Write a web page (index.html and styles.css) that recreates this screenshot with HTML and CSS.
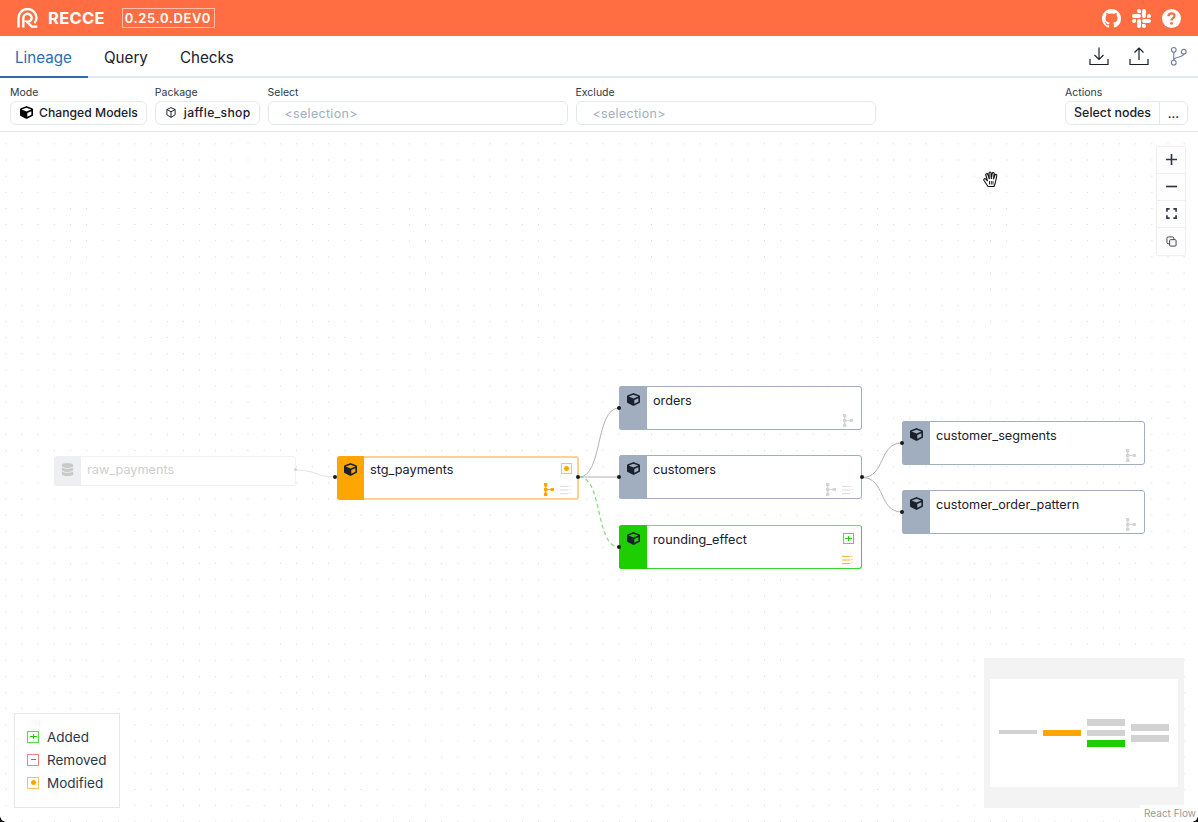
FILE: index.html
```html
<!DOCTYPE html>
<html>
  <head>
    <meta charset="utf-8">
    <title>Recce</title>
    <link rel="stylesheet" href="styles.css">
  </head>
  <body>
    <svg class="defs" width="0" height="0">
      <symbol id="cube" viewBox="0 0 512 512"><path d="M239.1 6.3l-208 78c-18.7 7-31.1 25-31.1 45v225.1c0 18.2 10.3 34.8 26.5 42.9l208 104c13.5 6.8 29.4 6.8 42.9 0l208-104c16.3-8.1 26.5-24.8 26.5-42.9V129.3c0-20-12.4-37.9-31.1-44.9l-208-78C262 2.2 250 2.2 239.1 6.3zM256 68.4l192 72v1.1l-192 78-192-78v-1.1l192-72zm32 356V275.5l160-65v133.9l-160 80z"/></symbol>
      <symbol id="lineage" viewBox="0 0 10 13"><rect x="0" y="0" width="3.400" height="3.400"/><rect x="0" y="4.800" width="3.400" height="3.400"/><rect x="0" y="9.600" width="3.400" height="3.400"/><rect x="6.600" y="5" width="3.400" height="3"/><path d="M1.700 2v9M1.700 6.500h6" fill="none" stroke="currentColor" stroke-width="1.200"/></symbol>
      <symbol id="rows" viewBox="0 0 12 10"><path d="M0 1h9M0 5h9M0 9h9" fill="none" stroke="currentColor"/><path d="M11 .5v1.500M11 4v1.500M11 7.500v1.500" fill="none" stroke="currentColor" stroke-dasharray="1 1"/></symbol>
    </svg>

    <header class="topbar">
      <svg class="logo" viewBox="0 0 21 20" fill="none" stroke="#fff" stroke-width="2.400">
        <path d="M1.500 19.500V10a9 9 0 0 1 18 0c0 2.200-.8 3.800-2.200 5"/>
        <path d="M6.300 19.500V10a4.200 4.200 0 0 1 8.400 0 3.800 3.800 0 0 1-3.800 3.600H9.800l5 5h5.500"/>
      </svg>
      <span class="brand">RECCE</span>
      <span class="version">0.25.0.DEV0</span>
      <span class="top-icons">
        <svg class="top-icon" viewBox="0 0 16 16"><path d="M8 0C3.58 0 0 3.58 0 8c0 3.54 2.29 6.53 5.47 7.59.4.07.55-.17.55-.38 0-.19-.01-.82-.01-1.49-2.01.37-2.53-.49-2.69-.94-.09-.23-.48-.94-.82-1.13-.28-.15-.68-.52-.01-.53.63-.01 1.08.58 1.23.82.72 1.21 1.87.87 2.33.66.07-.52.28-.87.51-1.07-1.78-.2-3.64-.89-3.64-3.95 0-.87.31-1.59.82-2.15-.08-.2-.36-1.02.08-2.12 0 0 .67-.21 2.2.82.64-.18 1.32-.27 2-.27.68 0 1.36.09 2 .27 1.53-1.04 2.2-.82 2.2-.82.44 1.1.16 1.92.08 2.12.51.56.82 1.27.82 2.15 0 3.07-1.87 3.75-3.65 3.95.29.25.54.73.54 1.48 0 1.07-.01 1.93-.01 2.2 0 .21.15.46.55.38A8.013 8.013 0 0016 8c0-4.42-3.58-8-8-8z"/></svg>
        <svg class="top-icon" viewBox="0 0 24 24"><path d="M5.042 15.165a2.528 2.528 0 0 1-2.52 2.523A2.528 2.528 0 0 1 0 15.165a2.527 2.527 0 0 1 2.522-2.52h2.52v2.52zM6.313 15.165a2.527 2.527 0 0 1 2.521-2.52 2.527 2.527 0 0 1 2.521 2.52v6.313A2.528 2.528 0 0 1 8.834 24a2.528 2.528 0 0 1-2.521-2.522v-6.313zM8.834 5.042a2.528 2.528 0 0 1-2.521-2.52A2.528 2.528 0 0 1 8.834 0a2.528 2.528 0 0 1 2.521 2.522v2.52H8.834zM8.834 6.313a2.528 2.528 0 0 1 2.521 2.521 2.528 2.528 0 0 1-2.521 2.521H2.522A2.528 2.528 0 0 1 0 8.834a2.528 2.528 0 0 1 2.522-2.521h6.312zM18.956 8.834a2.528 2.528 0 0 1 2.522-2.521A2.528 2.528 0 0 1 24 8.834a2.528 2.528 0 0 1-2.522 2.521h-2.522V8.834zM17.688 8.834a2.528 2.528 0 0 1-2.523 2.521 2.527 2.527 0 0 1-2.52-2.521V2.522A2.527 2.527 0 0 1 15.165 0a2.528 2.528 0 0 1 2.523 2.522v6.312zM15.165 18.956a2.528 2.528 0 0 1 2.523 2.522A2.528 2.528 0 0 1 15.165 24a2.527 2.527 0 0 1-2.52-2.522v-2.522h2.52zM15.165 17.688a2.527 2.527 0 0 1-2.52-2.523 2.526 2.526 0 0 1 2.52-2.52h6.313A2.527 2.527 0 0 1 24 15.165a2.528 2.528 0 0 1-2.522 2.523h-6.313z"/></svg>
        <svg class="top-icon" viewBox="0 0 20 20"><circle cx="10" cy="10" r="10"/><path d="M6.800 7.600c0-2 1.500-3.100 3.300-3.100s3.100 1.100 3.100 2.700c0 2.500-3.200 2.400-3.200 4.900" fill="none" stroke="#ff6e42" stroke-width="2.400"/><circle cx="10" cy="15.200" r="1.500" fill="#ff6e42"/></svg>
      </span>
    </header>

    <nav class="tabs">
      <a class="tab tab-active">Lineage</a>
      <a class="tab">Query</a>
      <a class="tab">Checks</a>
      <span class="tab-icons">
        <svg class="tab-icon" viewBox="0 0 20 20"><path d="M10 1.500v12M5.500 9l4.500 4.500L14.500 9M1 13v5.500h18V13"/></svg>
        <svg class="tab-icon" viewBox="0 0 20 20"><path d="M10 14V2M5.500 6.500L10 2l4.500 4.500M1 13v5.500h18V13"/></svg>
        <svg class="tab-icon tab-icon-git" viewBox="0 0 20 20"><circle cx="5" cy="3.500" r="2.500"/><circle cx="5" cy="17" r="2.500"/><circle cx="15.500" cy="5.500" r="2.500"/><path d="M5 6v8.500M15.500 8c0 4-10.500 2-10.500 6.500"/></svg>
      </span>
    </nav>

    <section class="filters">
      <div class="field">
        <label class="field-label">Mode</label>
        <button class="pill pill-mode"><svg class="pill-icon"><use href="#cube"/></svg>Changed Models</button>
      </div>
      <div class="field">
        <label class="field-label">Package</label>
        <button class="pill pill-package">
          <svg class="pill-icon" viewBox="0 0 16 16" fill="none" stroke="#1a202c" stroke-width="1.300"><path d="M8 1.500l5.500 2.500v7L8 14.500 2.500 11V4zM2.500 4L8 7l5.500-3M8 7v7.500"/></svg>jaffle_shop
        </button>
      </div>
      <div class="field field-select">
        <label class="field-label">Select</label>
        <input class="selection" placeholder="<selection>">
      </div>
      <div class="field field-select">
        <label class="field-label">Exclude</label>
        <input class="selection" placeholder="<selection>">
      </div>
      <div class="field field-actions">
        <label class="field-label">Actions</label>
        <div class="btn-group">
          <button class="group-btn">Select nodes</button>
          <button class="group-btn group-more">...</button>
        </div>
      </div>
    </section>

    <main class="canvas">
      <svg class="edges" viewBox="0 132 1198 690">
        <path class="edge edge-faded" d="M296 470C316 470 316 477 335 477"/>
        <path class="edge" d="M579 477C603 477 595 408 619 408"/>
        <path class="edge" d="M579 477H619"/>
        <path class="edge edge-added" d="M579 477C603 477 595 547 619 547"/>
        <path class="edge" d="M862 477.500C886 477.500 878 443 902 443"/>
        <path class="edge" d="M862 477.500C886 477.500 878 512 902 512"/>
      </svg>

      <div class="node node-faded" style="left:54px;top:324px">
        <div class="node-strip"><svg class="node-icon" viewBox="0 0 448 512"><path d="M448 73.120v45.750C448 159.200 347.700 192 224 192S0 159.200 0 118.900V73.120C0 32.800 100.300 0 224 0s224 32.800 224 73.120zM448 176v102.900C448 319.200 347.700 352 224 352S0 319.200 0 278.900V176c48.120 33.120 136.200 48.600 224 48.600S399.900 209.100 448 176zm0 160v102.900C448 479.200 347.700 512 224 512S0 479.200 0 438.900V336c48.120 33.130 136.200 48.630 224 48.630S399.900 369.100 448 336z"/></svg></div>
        <div class="node-name">raw_payments</div>
        <i class="handle handle-right handle-faded"></i>
      </div>

      <div class="node node-modified" style="left:337px;top:324px">
        <div class="node-strip"><svg class="node-icon"><use href="#cube"/></svg></div>
        <div class="node-name">stg_payments</div>
        <span class="badge badge-modified"><b></b></span>
        <span class="node-tools"><svg class="tool tool-lineage tool-orange"><use href="#lineage"/></svg><svg class="tool tool-rows tool-grey"><use href="#rows"/></svg></span>
        <i class="handle handle-left"></i><i class="handle handle-right"></i>
      </div>

      <div class="node" style="left:619px;top:254px">
        <div class="node-strip"><svg class="node-icon"><use href="#cube"/></svg></div>
        <div class="node-name">orders</div>
        <span class="node-tools"><svg class="tool tool-lineage tool-grey"><use href="#lineage"/></svg></span>
        <i class="handle handle-left"></i>
      </div>

      <div class="node" style="left:619px;top:323px">
        <div class="node-strip"><svg class="node-icon"><use href="#cube"/></svg></div>
        <div class="node-name">customers</div>
        <span class="node-tools"><svg class="tool tool-lineage tool-grey"><use href="#lineage"/></svg><svg class="tool tool-rows tool-grey"><use href="#rows"/></svg></span>
        <i class="handle handle-left"></i><i class="handle handle-right"></i>
      </div>

      <div class="node node-added" style="left:619px;top:393px">
        <div class="node-strip"><svg class="node-icon"><use href="#cube"/></svg></div>
        <div class="node-name">rounding_effect</div>
        <span class="badge badge-added"></span>
        <span class="node-tools"><svg class="tool tool-rows tool-orange"><use href="#rows"/></svg></span>
        <i class="handle handle-left"></i>
      </div>

      <div class="node" style="left:902px;top:289px">
        <div class="node-strip"><svg class="node-icon"><use href="#cube"/></svg></div>
        <div class="node-name">customer_segments</div>
        <span class="node-tools"><svg class="tool tool-lineage tool-grey"><use href="#lineage"/></svg></span>
        <i class="handle handle-left"></i>
      </div>

      <div class="node" style="left:902px;top:358px">
        <div class="node-strip"><svg class="node-icon"><use href="#cube"/></svg></div>
        <div class="node-name">customer_order_pattern</div>
        <span class="node-tools"><svg class="tool tool-lineage tool-grey"><use href="#lineage"/></svg></span>
        <i class="handle handle-left"></i>
      </div>

      <div class="controls">
        <button class="ctl"><svg viewBox="0 0 14 14"><path d="M7 1v12M1 7h12"/></svg></button>
        <button class="ctl"><svg viewBox="0 0 14 14"><path d="M1 7h12"/></svg></button>
        <button class="ctl"><svg class="ctl-small" viewBox="0 0 12 12"><path d="M1 4V1h3M8 1h3v3M11 8v3H8M4 11H1V8"/></svg></button>
        <button class="ctl"><svg class="ctl-small ctl-thin" viewBox="0 0 12 12"><rect x="4" y="4" width="7" height="7" rx="1"/><path d="M4 8.500H2.500a1.500 1.500 0 0 1-1.500-1.500V2.500A1.500 1.500 0 0 1 2.500 1H7a1.500 1.500 0 0 1 1.500 1.500V4"/></svg></button>
      </div>

      <svg class="hand" viewBox="0 0 18 18"><path d="M6 16.500L2 10.500c-.8-1.300.8-2.500 1.800-1.300L5.500 11 3.800 5c-.4-1.300 1.600-1.900 2-.6L7.300 9 7 3c0-1.300 2-1.300 2 0l.3 6 .9-5.600c.2-1.300 2.200-1 2 .3L11.400 9.200 13 5c.4-1.200 2.200-.6 1.800.6L13.500 12c-.3 1.800-1 3-1.500 4.500z"/><path class="hand-lines" d="M7.500 11v3.500M9.300 11v3.500M11 11v3.500"/></svg>

      <aside class="legend">
        <div class="legend-row"><span class="badge-static badge-added"></span>Added</div>
        <div class="legend-row"><span class="badge-static badge-removed"></span>Removed</div>
        <div class="legend-row"><span class="badge-static badge-modified"><b></b></span>Modified</div>
      </aside>

      <aside class="minimap">
        <svg viewBox="984 658 200 150">
          <rect x="990" y="679" width="188" height="108" fill="#fff"/>
          <rect x="999" y="730" width="38" height="4" fill="#d2d2d2"/>
          <rect x="1043" y="730" width="38" height="6" fill="#ffa502"/>
          <rect x="1087" y="719" width="38" height="7" fill="#d2d2d2"/>
          <rect x="1087" y="730" width="38" height="6" fill="#d2d2d2"/>
          <rect x="1087" y="740" width="38" height="7" fill="#1dce00"/>
          <rect x="1131" y="724" width="38" height="7" fill="#d2d2d2"/>
          <rect x="1131" y="735" width="38" height="7" fill="#d2d2d2"/>
        </svg>
      </aside>
      <span class="attribution">React Flow</span>
      <i class="corner corner-left"></i>
      <i class="corner corner-right"></i>
    </main>
  </body>
</html>
```

FILE: styles.css
```css
* { box-sizing: border-box; }

html, body { height: 100%; }

body {
  margin: 0;
  display: flex;
  flex-direction: column;
  height: 822px;
  overflow: hidden;
  background: #fff;
  color: #1a202c;
  font-family: Inter, "Liberation Sans", sans-serif;
}

.defs { position: absolute; }

/* top bar */
.topbar {
  height: 36px;
  flex: none;
  display: flex;
  align-items: center;
  padding: 0 17px;
  background: #ff6e42;
  color: #fff;
}
.logo { width: 21px; height: 20px; margin-right: 10px; }
.brand { font-size: 16.500px; font-weight: 700; letter-spacing: 0.3px; margin-right: 17px; }
.version {
  border: 1px solid rgba(255, 255, 255, 0.55);
  padding: 0 3px 0 2px;
  height: 20px;
  line-height: 18px;
  font-size: 13px;
  font-weight: 600;
  letter-spacing: 0.6px;
}
.top-icons { margin-left: auto; display: flex; gap: 11px; align-items: center; }
.top-icon { width: 19px; height: 19px; fill: #fff; }

/* tabs */
.tabs {
  height: 42px;
  flex: none;
  display: flex;
  border-bottom: 2px solid #e2e8f0;
}
.tab {
  height: 42px;
  padding: 0 16px;
  line-height: 43px;
  font-size: 15.200px;
  color: #1a202c;
}
.tab-active { color: #2b6cb0; border-bottom: 2px solid #2b6cb0; padding: 0 16px 0 15px; }
.tab-icons { margin-left: auto; display: flex; gap: 20px; align-items: center; padding-right: 10px; }
.tab-icon { width: 20px; height: 20px; fill: none; stroke: #1a202c; stroke-width: 1.200; }
.tab-icon-git { stroke: #718096; width: 19px; }

/* filter row */
.filters {
  height: 54px;
  flex: none;
  display: flex;
  align-items: flex-start;
  gap: 8px;
  padding: 8px 10px 0;
  border-bottom: 1px solid #e2e8f0;
}
.field { display: flex; flex-direction: column; }
.field-label { font-size: 10.500px; line-height: 14px; margin-bottom: 1px; color: #2d3748; }
.pill {
  display: flex;
  align-items: center;
  height: 24px;
  padding: 0 8px 1px;
  border: 1px solid #e2e8f0;
  border-radius: 6px;
  background: #fff;
  font: 500 12.200px Inter, "Liberation Sans", sans-serif;
  color: #1a202c;
}
.pill-icon { width: 13px; height: 13px; margin-right: 6px; }
.pill-mode .pill-icon { margin-left: 1px; }
.pill-package { padding-left: 9px; letter-spacing: 0.3px; }
.pill-package .pill-icon { width: 12px; margin-right: 7px; }
.field-select { width: 300px; }
.selection {
  height: 24px;
  width: 100%;
  padding: 0 16px;
  border: 1px solid #e2e8f0;
  border-radius: 6px;
  font: 12.500px Inter, "Liberation Sans", sans-serif;
  letter-spacing: 0.3px;
}
.selection::placeholder { color: #a0aec0; }
.field-actions { margin-left: auto; }
.btn-group { display: flex; height: 24px; border: 1px solid #e2e8f0; border-radius: 6px; }
.group-btn {
  padding: 0 8px 1px;
  border: 0;
  background: none;
  font: 500 12.400px Inter, "Liberation Sans", sans-serif;
  color: #1a202c;
}
.group-more { width: 28px; padding: 0; border-left: 1px solid #e2e8f0; }

/* canvas */
.canvas {
  position: relative;
  flex: 1;
  background-image: radial-gradient(circle, #d0d0d0 0.6px, transparent 0.95px);
  background-size: 16.150px 16.150px;
  background-position: -2.200px 3.800px;
}
.edges { position: absolute; left: 0; top: 0; width: 1198px; height: 690px; }
.edge { fill: none; stroke: #b1b1b7; stroke-width: 1; }
.edge-faded { stroke: #e4e4e7; }
.edge-added { stroke: #8fdc85; stroke-width: 1.300; stroke-dasharray: 4 3; }

.node {
  position: absolute;
  width: 243px;
  height: 44px;
  display: flex;
  border: 1px solid #a0aec0;
  border-radius: 3px;
  background: #fff;
}
.node-strip {
  width: 28px;
  flex: none;
  display: flex;
  justify-content: center;
  padding-top: 7px;
  margin: -1px 0 -1px -1px;
  border-radius: 3px 0 0 3px;
  background: #a0aec0;
}
.node-icon { width: 13px; height: 13px; fill: #1a202c; }
.node-name { padding: 6px 0 0 6px; font-size: 12.700px; line-height: 16px; color: #1a202c; }

.node-modified { width: 242px; border-color: #ffd08f; border-width: 2px; }
.node-modified .node-strip { width: 27px; background: #ffa502; margin: -2px 0 -2px -2px; }
.node-modified .node-name { padding: 4px 0 0 6px; }
.node-modified .handle { top: 17px; }
.node-modified .handle-left { left: -6px; }
.node-modified .badge { top: 5px; right: 5px; }
.node-modified .node-tools { right: 6px; bottom: 2px; }
.node-added { border-color: #33d633; border-top-color: #a3b5a3; }
.node-added .node-strip { background: #1dce00; }
.node-faded { width: 242px; height: 30px; border-color: #f0f1f3; }
.node-faded .node-strip { width: 27px; background: #edeff2; }
.node-faded .node-icon { fill: #c9c9c9; }
.node-faded .node-name { color: #cfcfcf; padding-top: 5px; }

.handle {
  position: absolute;
  top: 19px;
  width: 4px;
  height: 4px;
  border-radius: 50%;
  background: #1a1a1a;
}
.handle-left { left: -3px; }
.handle-right { right: -3px; }
.handle-faded { top: 11px; right: -2px; width: 3px; height: 3px; background: #d4d4d4; }

.badge {
  position: absolute;
  top: 7px;
  right: 7px;
  width: 11px;
  height: 11px;
}
.badge, .badge-static {
  border: 1px solid;
  display: flex;
  align-items: center;
  justify-content: center;
}
.badge b, .badge-static b { width: 5px; height: 5px; border-radius: 50%; background: #ffa502; }
.badge-modified { border-color: #ffbf5e; }
.badge-added { border-color: #5adb46; background: linear-gradient(#1dce00, #1dce00) center / 7px 1px no-repeat, linear-gradient(#1dce00, #1dce00) center / 1px 5px no-repeat; }
.badge-removed { border-color: #ff8080; background: linear-gradient(#777, #777) center / 5px 1px no-repeat; }

.node-tools {
  position: absolute;
  right: 8px;
  bottom: 2px;
  display: flex;
  align-items: flex-end;
  gap: 6px;
}
.tool-lineage { width: 10px; height: 13px; }
.tool-rows { width: 11px; height: 10px; margin-bottom: 1px; }
.tool-orange { color: #ffa502; fill: #ffa502; }
.tool-grey { color: #d6d6d6; fill: #d6d6d6; }

/* overlays */
.controls {
  position: absolute;
  top: 14.500px;
  right: 13px;
  width: 28px;
  box-shadow: 0 0 2px rgba(0, 0, 0, 0.2);
  background: #fefefe;
}
.ctl {
  display: flex;
  align-items: center;
  justify-content: center;
  width: 100%;
  height: 27px;
  padding: 0;
  border: 0;
  border-bottom: 1px solid #eee;
  background: #fefefe;
}
.ctl:last-child { border-bottom: 0; }
.ctl svg { width: 13px; height: 13px; fill: none; stroke: #2d3748; stroke-width: 1.800; }
.ctl .ctl-small { width: 11px; height: 11px; }
.ctl .ctl-thin { stroke-width: 1; }

.hand { position: absolute; left: 982px; top: 38px; width: 18px; height: 18px; fill: #fff; stroke: #111; stroke-width: 1.100; }
.hand-lines { stroke-width: 0.900; }

.legend {
  position: absolute;
  left: 14px;
  bottom: 14px;
  width: 106px;
  height: 95px;
  padding: 11px 12px;
  border: 1px solid #e2e8f0;
  background: #fff;
  font-size: 13.500px;
  color: #2d3748;
}
.legend-row { display: flex; align-items: center; height: 23px; }
.badge-static { width: 12px; height: 12px; margin-right: 8px; flex: none; }

.minimap { position: absolute; right: 14px; bottom: 14px; width: 200px; height: 150px; background: #f3f3f3; }
.minimap svg { display: block; width: 100%; height: 100%; }

.attribution {
  position: absolute;
  right: 0;
  bottom: 0;
  padding: 2px 2px 3px 4px;
  background: rgba(255, 255, 255, 0.8);
  font-size: 10px;
  line-height: 12px;
  color: #999;
}

.corner { position: absolute; bottom: 0; width: 6px; height: 6px; }
.corner-left { left: 0; background: radial-gradient(circle at 100% 0, transparent 5.500px, #111 6px); }
.corner-right { right: 0; background: radial-gradient(circle at 0 0, transparent 5.500px, #111 6px); }
```
